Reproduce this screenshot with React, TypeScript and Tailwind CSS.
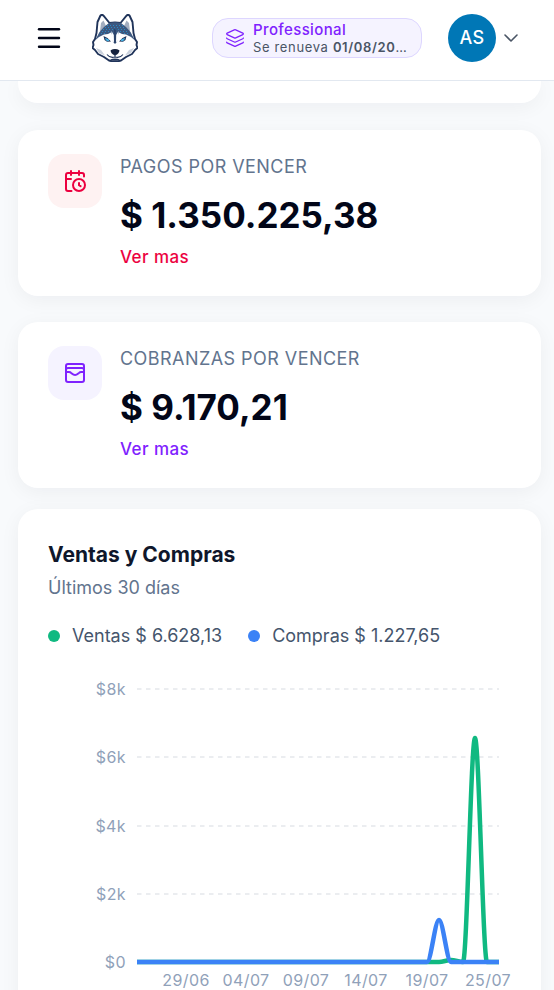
import type { ReactNode } from 'react';
import { CalendarClock, ChevronDown, Layers, Menu, WalletCards } from 'lucide-react';

const card = 'rounded-[20px] bg-white shadow-[0_4px_20px_rgba(15,23,42,0.05)]';

function HuskyLogo() {
  return (
    <svg viewBox="0 0 46 48" className="h-12 w-[46px]" aria-hidden="true">
      <path
        d="M4.5 19 5.5 8 8.5 1.5Q10 .2 11.5 1.7L17.5 9Q23 7.8 28.5 9L34.5 1.7Q36 .2 37.5 1.5L40.5 8 41.5 19 43 25 45 28 44.5 31 45.5 34 43 36 40 40 34 43 29 46.5Q23 48.5 17 46.5L12 43 6 40 3 36 .5 34 1.5 31 1 28 3 25Z"
        fill="#fff"
        stroke="#20345a"
        strokeWidth="1.9"
        strokeLinejoin="round"
      />
      <path d="M8 17 9 9 11.5 6.5 14 12 10.5 17Z" fill="#a3aec0" />
      <path d="M38 17 37 9 34.5 6.5 32 12 35.5 17Z" fill="#a3aec0" />
      <path
        d="M17 9Q23 7.5 29 9L34 13 38.5 18 43 26.5 39 23 34 20.5 30 20 27 18.5 25.5 22 25 28 23 30 21 28 20.5 22 19 18.5 16 20 12 20.5 7 23 3 26.5 7.5 18 12 13Z"
        fill="#3c5880"
      />
      <path
        d="M15 11.5H31M13 13.5H33M11 15.5H35M10 17.5H18M28 17.5H37M9 19.5H14M32 19.5H38"
        stroke="#2a8fcc"
        strokeWidth=".9"
        strokeDasharray="1 2"
      />
      <path d="M19.5 17 21.8 21 22 29 19.5 25ZM26.5 17 24.2 21 24 29 26.5 25Z" fill="#fff" />
      <path d="M23 15V29" stroke="#20345a" strokeWidth="1.1" />
      <path d="M11.5 22 15.5 24 19 27.5 15 27.8 12.5 26Z" fill="#20345a" />
      <path d="M34.5 22 30.5 24 27 27.5 31 27.8 33.5 26Z" fill="#20345a" />
      <path d="M13.6 24.6 17 26.2 15 26.8Z" fill="#45b6e8" stroke="#45b6e8" />
      <path d="M32.4 24.6 29 26.2 31 26.8Z" fill="#45b6e8" stroke="#45b6e8" />
      <path d="M4 34 9 36 13 41.5 7 39ZM42 34 37 36 33 41.5 39 39Z" fill="#cbd2dd" />
      <path d="M18.6 36.2Q23 33.6 27.4 36.2 27.6 39.6 23 41.4 18.4 39.6 18.6 36.2Z" fill="#14213d" />
      <path d="M23 40V43M15 40.5Q18 44.5 23 43 28 44.5 31 40.5" fill="none" stroke="#20345a" strokeWidth="1.1" />
      <path d="M18 45.5Q23 43.5 28 45.5 23 48 18 45.5Z" fill="#20345a" />
    </svg>
  );
}

function Header() {
  return (
    <header className="relative z-10 flex h-[81px] shrink-0 items-center border-b border-slate-200 bg-white pr-[31px] pb-1 pl-[34px]">
      <button type="button" aria-label="Menú" className="text-slate-950">
        <Menu size={30} strokeWidth={1.9} />
      </button>
      <a href="#inicio" aria-label="Inicio" className="ml-7">
        <HuskyLogo />
      </a>
      <a
        href="#plan"
        className="ml-auto flex h-10 w-[210px] items-center gap-2 rounded-2xl border border-violet-200 bg-violet-50 px-3"
      >
        <Layers size={20} strokeWidth={1.5} className="shrink-0 text-violet-600" />
        <span className="min-w-0">
          <span className="block text-[15px] leading-[18px] font-medium tracking-wide text-violet-600">Professional</span>
          <span className="block truncate text-[13px] leading-[17px] tracking-wider text-gray-600">
            Se renueva <b className="font-semibold">01/08/2026</b>
          </span>
        </span>
      </a>
      <button type="button" aria-label="Cuenta" className="ml-[26px] flex items-center gap-[3px] text-gray-600">
        <span className="flex size-12 items-center justify-center rounded-full bg-[#0077b6] text-lg font-medium tracking-wide text-white">
          AS
        </span>
        <ChevronDown size={24} strokeWidth={1.6} />
      </button>
    </header>
  );
}

type StatProps = { label: string; value: string; icon: ReactNode; tile: string; link: string };

function StatCard({ label, value, icon, tile, link }: StatProps) {
  return (
    <section className={`${card} flex gap-[18px] px-[30px] pt-6 pb-6`}>
      <div className={`flex size-[54px] shrink-0 items-center justify-center rounded-2xl ${tile}`}>{icon}</div>
      <div>
        <h2 className="text-lg leading-[26px] tracking-wide text-slate-500">{label}</h2>
        <p className="mt-2 text-[35px] leading-[54px] font-bold text-slate-950">{value}</p>
        <a href="#detalle" className={`block text-[17px] leading-[30px] font-medium tracking-wide ${link}`}>
          Ver mas
        </a>
      </div>
    </section>
  );
}

const yTicks = [
  { label: '$8k', y: 19 },
  { label: '$6k', y: 87 },
  { label: '$4k', y: 156 },
  { label: '$2k', y: 224 },
  { label: '$0', y: 292 },
];

const xTicks = [
  { label: '29/06', x: 138 },
  { label: '04/07', x: 198 },
  { label: '09/07', x: 258 },
  { label: '14/07', x: 318 },
  { label: '19/07', x: 379 },
  { label: '25/07', x: 440 },
];

function SalesChart() {
  return (
    <svg viewBox="0 0 463 330" className="block w-full" role="img" aria-label="Ventas y compras de los últimos 30 días">
      {yTicks.map((t) => (
        <g key={t.label}>
          {t.y < 292 && <path d={`M89 ${t.y}H451`} stroke="#e5e7eb" strokeWidth="1.5" strokeDasharray="4.5 4.5" />}
          <text x="78" y={t.y + 6} textAnchor="end" className="fill-slate-400 text-base tracking-wide">
            {t.label}
          </text>
        </g>
      ))}
      {xTicks.map((t) => (
        <text key={t.label} x={t.x} y="316" textAnchor="middle" className="fill-slate-400 text-base tracking-wide">
          {t.label}
        </text>
      ))}
      <g fill="none" strokeWidth="4.5">
        <path
          d="M89 292H379C383 292 387 292 391 292 395 292 399 290 403 290 407 290 411 292 415 292 419 292 423 68 427 68 431 68 435 292 439 292H451"
          stroke="#10b981"
        />
        <path d="M89 292H379C383 292 387 250 391 250 395 250 399 292 403 292H451" stroke="#3b82f6" />
      </g>
    </svg>
  );
}

export default function App() {
  return (
    <div className="flex h-screen flex-col overflow-hidden bg-slate-50 font-['Inter',sans-serif]">
      <Header />
      <main className="flex min-h-0 flex-1 flex-col pr-[13px] pl-[18px] *:shrink-0">
        <div className="h-[22px] rounded-b-[20px] bg-white shadow-[0_4px_20px_rgba(15,23,42,0.05)]" />
        <div className="mt-[27px] grid gap-[26px]">
          <StatCard
            label="PAGOS POR VENCER"
            value="$ 1.350.225,38"
            icon={<CalendarClock size={24} strokeWidth={2} />}
            tile="bg-red-50 text-rose-600"
            link="text-rose-600"
          />
          <StatCard
            label="COBRANZAS POR VENCER"
            value="$ 9.170,21"
            icon={<WalletCards size={24} strokeWidth={2} />}
            tile="bg-violet-50 text-violet-600"
            link="text-violet-600"
          />
        </div>
        <section className={`${card} mt-[21px] px-[30px] pt-[30px] pb-6`}>
          <h2 className="text-[21px] leading-8 font-bold text-slate-900">Ventas y Compras</h2>
          <p className="mt-1 text-lg leading-[26px] text-slate-500">Últimos 30 días</p>
          <ul className="mt-[21px] mb-5 flex flex-wrap gap-[26px] text-lg leading-7 text-slate-600">
            <li className="flex items-center gap-3">
              <span className="size-3 rounded-full bg-[#10b981]" />
              Ventas $ 6.628,13
            </li>
            <li className="flex items-center gap-3">
              <span className="size-3 rounded-full bg-[#3b82f6]" />
              Compras $ 1.227,65
            </li>
          </ul>
          <SalesChart />
        </section>
      </main>
    </div>
  );
}
